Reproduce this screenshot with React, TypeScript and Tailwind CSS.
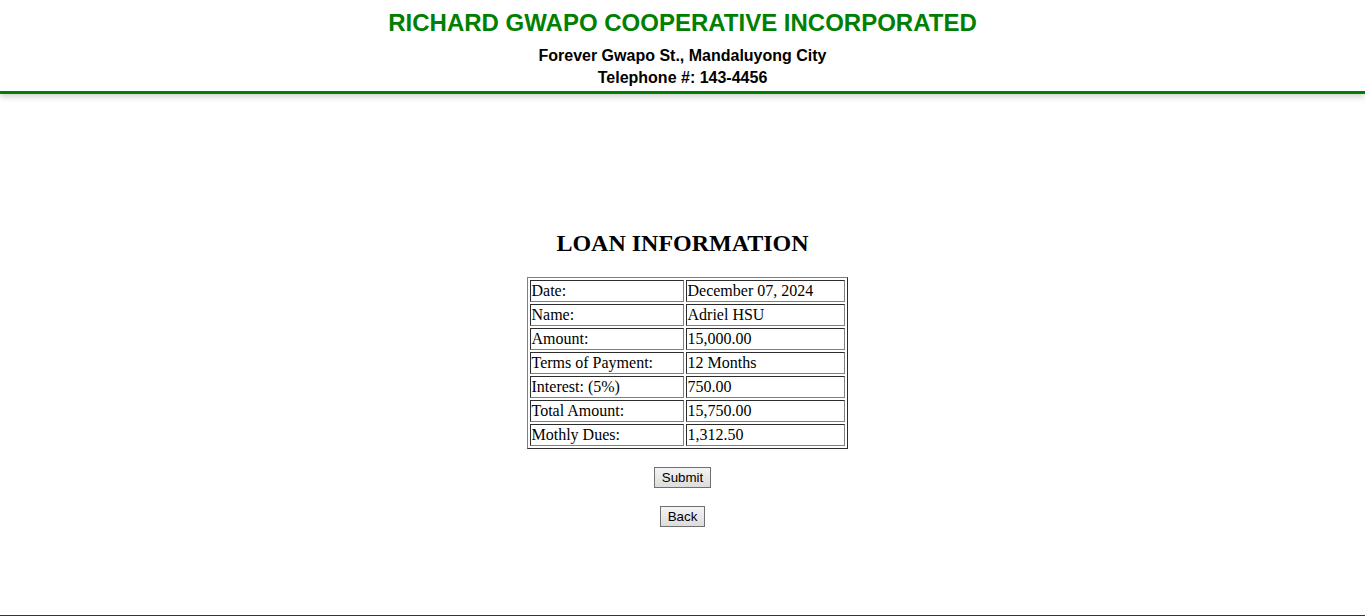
export default function App() {
  const rows: [string, string][] = [
    ["Date:", "December 07, 2024"],
    ["Name:", "Adriel HSU"],
    ["Amount:", "15,000.00"],
    ["Terms of Payment:", "12 Months"],
    ["Interest: (5%)", "750.00"],
    ["Total Amount:", "15,750.00"],
    ["Mothly Dues:", "1,312.50"],
  ];

  return (
    <div className="bg-white min-h-screen">
      <header className="pt-[9px] pb-[2px] text-center font-['Liberation_Sans',Arial,sans-serif] border-b-[3px] border-[#008000] shadow-[0_3px_6px_rgba(0,0,0,0.18)]">
        <h1 className="text-[24px] leading-[28px] font-bold text-[#008000]">
          RICHARD GWAPO COOPERATIVE INCORPORATED
        </h1>
        <p className="mt-[8px] text-[16px] leading-[22px] font-bold text-black">
          Forever Gwapo St., Mandaluyong City
        </p>
        <p className="text-[16px] leading-[22px] font-bold text-black">
          Telephone #: 143-4456
        </p>
      </header>

      <main className="h-[521px] pt-[135px] flex flex-col items-center font-['Liberation_Serif','Times_New_Roman',serif] text-black">
        <h2 className="text-[24px] leading-[28px] font-bold">LOAN INFORMATION</h2>

        <table className="mt-[20px] ml-[9px] w-[321px] border-separate border-spacing-[2px] border border-[#808080] [border-style:outset] text-[16px] leading-[18px]">
          <tbody>
            {rows.map(([label, value]) => (
              <tr key={label}>
                <td className="w-[154px] p-px border border-[#808080] [border-style:inset] text-left">
                  {label}
                </td>
                <td className="p-px border border-[#808080] [border-style:inset] text-left">
                  {value}
                </td>
              </tr>
            ))}
          </tbody>
        </table>

        <button className="mt-[18px] h-[21px] px-[7px] border border-[#707070] bg-gradient-to-b from-[#f4f4f4] to-[#dcdcdc] font-['Liberation_Sans',Arial,sans-serif] text-[13.33px] leading-[15px] text-black">
          Submit
        </button>
        <button className="mt-[18px] h-[21px] px-[7px] border border-[#707070] bg-gradient-to-b from-[#f4f4f4] to-[#dcdcdc] font-['Liberation_Sans',Arial,sans-serif] text-[13.33px] leading-[15px] text-black">
          Back
        </button>
      </main>

      <footer className="h-px border-t border-[#333333]" />
    </div>
  );
}
